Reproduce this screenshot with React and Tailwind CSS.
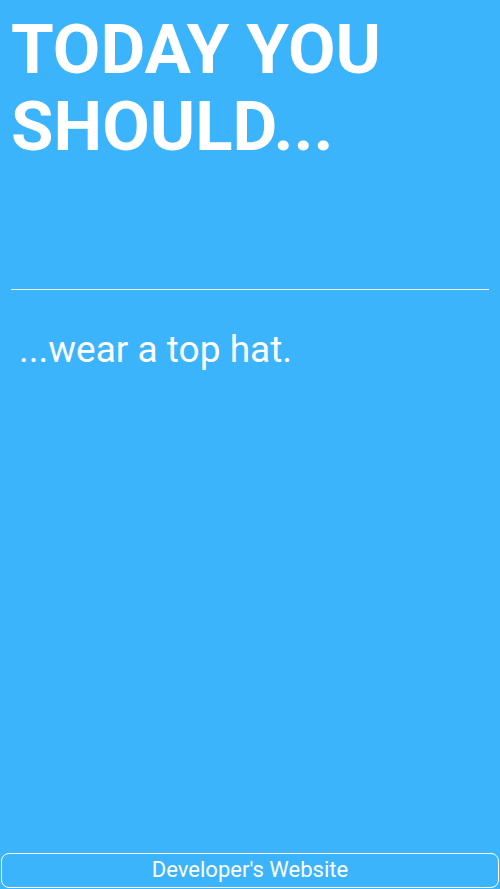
export default function App() {
  return (
    <div
      className="flex h-[889px] w-[500px] flex-col bg-[#3bb4fc] text-white"
      style={{ fontFamily: 'Roboto, "Liberation Sans", sans-serif' }}
    >
      {/* Title */}
      <div className="px-[11px] pt-[11px]">
        <h1 className="text-[69px] font-bold leading-[77px]">
          TODAY YOU
          <br />
          SHOULD...
        </h1>
      </div>

      {/* Divider */}
      <div className="mx-[11px] mt-[124px] h-px bg-white/90" />

      {/* Suggestion */}
      <p className="mt-[38px] px-[19px] text-[37px] leading-[44px]">...wear a top hat.</p>

      <div className="flex-1" />

      {/* Footer link */}
      <button className="mx-px mb-px flex h-[35px] items-center justify-center rounded-[8px] border border-white pb-[3px] text-[22px]">
        Developer's Website
      </button>
    </div>
  )
}
